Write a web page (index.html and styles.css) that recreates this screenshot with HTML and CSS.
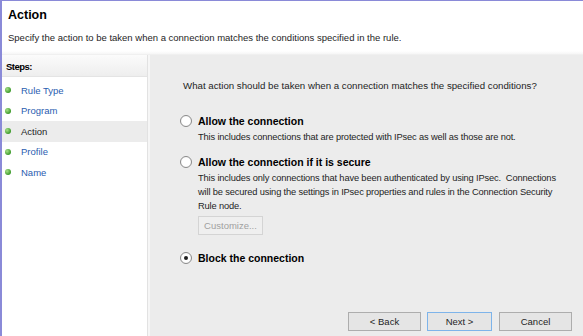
FILE: index.html
```html
<!DOCTYPE html>
<html lang="en">
<head>
    <meta charset="UTF-8">
    <title>New Inbound Rule Wizard - Action</title>
    <link rel="stylesheet" href="styles.css">
</head>
<body>

<div class="wizard">
    <div class="header">
        <h1>Action</h1>
        <p class="subtitle">Specify the action to be taken when a connection matches the conditions specified in the rule.</p>
    </div>

    <div class="body">
        <div class="steps">
            <div class="steps-title">Steps:</div>
            <ul class="step-list">
                <li class="step"><span class="dot"></span>Rule Type</li>
                <li class="step"><span class="dot"></span>Program</li>
                <li class="step current"><span class="dot"></span>Action</li>
                <li class="step"><span class="dot"></span>Profile</li>
                <li class="step"><span class="dot"></span>Name</li>
            </ul>
        </div>

        <div class="content">
            <p class="question">What action should be taken when a connection matches the specified conditions?</p>

            <div class="option first">
                <label class="option-label"><span class="radio"></span>Allow the connection</label>
                <p class="option-desc">This includes connections that are protected with IPsec as well as those are not.</p>
            </div>

            <div class="option">
                <label class="option-label"><span class="radio"></span>Allow the connection if it is secure</label>
                <p class="option-desc">This includes only connections that have been authenticated by using IPsec.&nbsp; Connections<br>
                    will be secured using the settings in IPsec properties and rules in the Connection Security<br>
                    Rule node.</p>
                <button class="button disabled">Customize...</button>
            </div>

            <div class="option last">
                <label class="option-label"><span class="radio checked"></span>Block the connection</label>
            </div>

            <div class="actions">
                <button class="button">&lt; Back</button>
                <button class="button default">Next &gt;</button>
                <button class="button">Cancel</button>
            </div>
        </div>
    </div>
</div>

</body>
</html>
```

FILE: styles.css
```css
body {
    margin: 0;
    font-family: "Liberation Sans", Arial, sans-serif;
    font-size: 9.5px;
    color: #1e1e1e;
    background-color: #ffffff;
}
.wizard {
    width: 583px;
    height: 336px;
    box-sizing: border-box;
    border-top: 1px solid #8a8ad8;
    border-left: 2px solid #8a8ad8;
    display: flex;
    flex-direction: column;
    overflow: hidden;
}
.header {
    height: 54px;
    flex-shrink: 0;
    box-sizing: border-box;
    padding: 6px 6px 0;
    background: linear-gradient(#ffffff 50px, #f6f6f6);
    border-bottom: 1px solid #f0f0f0;
}
.header h1 {
    margin: 0;
    font-size: 12.5px;
    line-height: 16px;
    font-weight: bold;
    color: #000000;
}
.subtitle {
    margin: 8px 0 0;
    line-height: 13px;
}
.body {
    flex: 1;
    display: flex;
    min-width: 0;
}
.steps {
    width: 145px;
    flex-shrink: 0;
    background-color: #ffffff;
    border-right: 1px solid #e2e2e2;
}
.steps-title {
    height: 21px;
    line-height: 23px;
    padding-left: 4px;
    font-weight: bold;
    color: #000000;
    letter-spacing: -0.5px;
    background: linear-gradient(#fbfbfb, #eeeeee);
    border-bottom: 1px solid #e4e4e4;
}
.step-list {
    list-style: none;
    margin: 3px 0 0;
    padding: 0;
}
.step {
    height: 20.5px;
    padding-left: 3px;
    color: #2a5db0;
    display: flex;
    align-items: center;
}
.step.current {
    background-color: #ececec;
    color: #1e1e1e;
}
.dot {
    width: 6px;
    height: 6px;
    border-radius: 50%;
    margin-right: 10px;
    background: radial-gradient(circle at 35% 35%, #a8e08a, #3c9a2a 70%);
}
.content {
    flex: 1;
    min-width: 0;
    background-color: #ececec;
    border-left: 2px solid #f6f6f6;
    padding: 0 0 0 30px;
    position: relative;
}
.question {
    margin: 24px 0 0 3px;
    font-size: 9.7px;
    line-height: 14px;
}
.option.first {
    margin-top: 21px;
}
.option {
    margin-top: 11px;
}
.option.last {
    margin-top: 16px;
}
.option-label {
    display: flex;
    align-items: center;
    height: 14px;
    font-weight: bold;
    font-size: 10.5px;
    color: #000000;
}
.radio {
    width: 10px;
    height: 10px;
    border: 1px solid #8a8a8a;
    border-radius: 50%;
    background: radial-gradient(#ffffff 50%, #ececec);
    margin-right: 6px;
    display: flex;
    align-items: center;
    justify-content: center;
}
.radio.checked::after {
    content: "";
    width: 4px;
    height: 4px;
    border-radius: 50%;
    background-color: #1e1e1e;
}
.option-desc {
    margin: 2px 0 0 18px;
    font-size: 9.3px;
    letter-spacing: -0.15px;
    line-height: 14px;
    white-space: nowrap;
}
.option-desc + .button {
    margin-top: 3px;
}
.button {
    font-family: "Liberation Sans", Arial, sans-serif;
    font-size: 9.5px;
    height: 19px;
    padding: 0 10px;
    border: 1px solid #adadad;
    background-color: #e5e5e5;
    color: #1e1e1e;
}
.button.disabled {
    margin-left: 18px;
    width: 65px;
    padding: 0;
    color: #a0a0a0;
    border-color: #d4d4d4;
    background-color: #efefef;
}
.button.default {
    border-color: #7eb4ea;
}
.actions {
    position: absolute;
    right: 11px;
    bottom: 5px;
    display: flex;
    gap: 6px;
}
.actions .button {
    width: 73px;
}
.actions .default {
    width: 65px;
    margin-right: 1px;
}
```
